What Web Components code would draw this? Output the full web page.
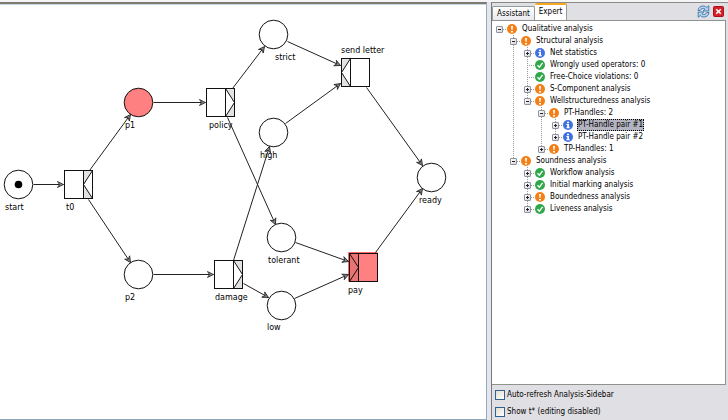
<!DOCTYPE html>
<html lang="en">
<head>
<meta charset="utf-8">
<title>Petri net analysis</title>
<style>
body{margin:0;background:#e0dfe3;color:#000;font:8px/12px "DejaVu Sans Condensed","DejaVu Sans",sans-serif;}
</style>
</head>
<body>
<net-workbench>
  <petri-net slot="editor"></petri-net>
  <analysis-sidebar slot="sidebar">
    <tree-item label="Qualitative analysis" icon="warn" state="open" root>
      <tree-item label="Structural analysis" icon="warn" state="open">
        <tree-item label="Net statistics" icon="info" state="closed"></tree-item>
        <tree-item label="Wrongly used operators: 0" icon="ok"></tree-item>
        <tree-item label="Free-Choice violations: 0" icon="ok"></tree-item>
        <tree-item label="S-Component analysis" icon="warn" state="closed"></tree-item>
        <tree-item label="Wellstructuredness analysis" icon="warn" state="open" last>
          <tree-item label="PT-Handles: 2" icon="warn" state="open">
            <tree-item label="PT-Handle pair #1" icon="info" state="closed" selected></tree-item>
            <tree-item label="PT-Handle pair #2" icon="info" state="closed" last></tree-item>
          </tree-item>
          <tree-item label="TP-Handles: 1" icon="warn" state="closed" last></tree-item>
        </tree-item>
      </tree-item>
      <tree-item label="Soundness analysis" icon="warn" state="open" last>
        <tree-item label="Workflow analysis" icon="ok" state="closed"></tree-item>
        <tree-item label="Initial marking analysis" icon="ok" state="closed"></tree-item>
        <tree-item label="Boundedness analysis" icon="warn" state="closed"></tree-item>
        <tree-item label="Liveness analysis" icon="ok" state="closed" last></tree-item>
      </tree-item>
    </tree-item>
    <check-option slot="options" label="Auto-refresh Analysis-Sidebar"></check-option>
    <check-option slot="options" label="Show t* (editing disabled)"></check-option>
  </analysis-sidebar>
</net-workbench>
<script>
function shadow(el, html) {
  el.attachShadow({mode: 'open'}).innerHTML = html;
}

class NetWorkbench extends HTMLElement {
  constructor() {
    super();
    shadow(this, `<style>
      :host{display:grid;grid-template-columns:minmax(0,1fr) 237px;column-gap:4px;min-height:100vh;box-sizing:border-box;padding-top:2px;background:linear-gradient(#f4f4f4 2px,#e6e5e9 2px)}
      ::slotted(*){min-width:0}
    </style><slot name="editor"></slot><slot name="sidebar"></slot>`);
  }
}

class PetriNet extends HTMLElement {
  constructor() {
    super();
    const places = [
      [18, 184, 'start', 5, 210, 'token'], [138, 102, 'p1', 125, 128, 'hot'], [138, 274, 'p2', 125, 300, ''],
      [273, 34, 'strict', 275, 60, ''], [273, 132, 'high', 260, 158, ''], [281, 237, 'tolerant', 268, 263, ''],
      [281, 305, 'low', 267, 330, ''], [431, 177, 'ready', 419, 203, '']
    ];
    /* Gate kinds: the side of the strip and the way its triangle points. */
    const gates = {
      andSplit: ['M19 0h9L19 14l9 14h-9z', 'M28 0 19 14l9 14', 19],
      xorSplit: ['M19 0h9v28h-9l9-14z', 'M19 0l9 14-9 14', 19],
      xorJoin: ['M9 0H0v28h9L0 14z', 'M9 0 0 14l9 14', 9],
      andJoin: ['M0 0h9v28H0z', 'M0 0l9 14-9 14', 9]
    };
    const transitions = [
      [64, 170, 'andSplit', 't0', 66, 210, ''], [206, 88, 'xorSplit', 'policy', 209, 128, ''],
      [214, 260, 'xorSplit', 'damage', 215, 300, ''], [341, 58, 'xorJoin', 'send letter', 341, 53, ''],
      [349, 253, 'andJoin', 'pay', 348, 293, 'hot']
    ];
    const arcs = [
      [33, 184, 63, 184], [89, 170, 130, 114], [88, 199, 130, 262], [153, 102, 205, 102], [153, 274, 213, 274],
      [232, 88, 264, 46], [227, 117, 275, 224], [287, 41, 340, 65], [285, 123, 340, 83], [233, 260, 269, 146],
      [243, 283, 268, 297], [366, 87, 422, 165], [295, 242, 348, 261], [294, 298, 348, 274], [375, 252, 422, 188]
    ];
    const label = (t, x, y) => `<text x="${x}" y="${y}">${t}</text>`;
    shadow(this, `<style>
      :host{display:flex;background:#fff;border-top:2px solid #7d7b70;border-right:1px solid #8fadcb;border-bottom:1px solid #8fa6b8;box-shadow:inset 0 1px #c3d9ea}
      svg{display:block;flex:1;min-width:0;min-height:380px}
      .shape{fill:none;stroke:#111;stroke-width:1}
      circle.shape,rect.shape{fill:#fff}
      .hot circle.shape,.hot rect.shape{fill:#ff8080}
      .strip{fill:#e2e2e2}.hot .strip{fill:#e87474}
      .arc{stroke:#222;stroke-width:1}
      text{font:8px "DejaVu Sans",sans-serif;fill:#000}
    </style>
    <svg role="img" aria-label="Workflow net">
      <defs><marker id="head" viewBox="-1 -1 9 9" refX="6" refY="3" markerWidth="9" markerHeight="9" orient="auto" markerUnits="userSpaceOnUse"><path d="M0 0 6 3 0 6 2 3z" fill="#888" stroke="#222" stroke-width=".8"/></marker></defs>
      <g transform="translate(0 -4)">
      <g transform="translate(.5 .5)">
      ${places.map(([x, y, t, lx, ly, c]) => `<g class="${c}"><circle class="shape" cx="${x}" cy="${y}" r="14.300"/>${c === 'token' ? `<circle cx="${x}" cy="${y}" r="3.800"/>` : ''}</g>`).join('')}
      ${transitions.map(([x, y, k, t, lx, ly, c]) => `<g class="${c}" transform="translate(${x} ${y})">${c ? '<path d="M-1 28V-1h29" fill="none" stroke="#f66"/>' : ''}<rect class="shape" width="28" height="28"/><path class="strip" d="${gates[k][0]}"/><path class="shape" d="${gates[k][1]}M${gates[k][2]} 0v28"/><rect width="28" height="28" fill="none" stroke="#111"/></g>`).join('')}
      ${arcs.map(([a, b, c, d]) => `<line class="arc" x1="${a}" y1="${b}" x2="${c}" y2="${d}" marker-end="url(#head)"/>`).join('')}
      </g>
      ${places.map(p => label(p[2], p[3], p[4])).join('')}
      ${transitions.map(t => label(t[3], t[4], t[5])).join('')}
      </g>
    </svg>`);
  }
}

class StatusIcon extends HTMLElement {
  static observedAttributes = ['kind'];
  constructor() { super(); shadow(this, ''); }
  attributeChangedCallback() {
    const kinds = {
      warn: ['#f57f17', '<path d="M4 2h2L5.500 6h-1zM4 7h2v1.500H4z" fill="#fff"/>'],
      info: ['#4170e0', '<path d="M4 1.800h2v1.400H4zM3.400 4H6v3.300h.8v.9H3.400v-.9h.8V4.900h-.8z" fill="#fff"/>'],
      ok: ['#2fa84a', '<path d="M2.500 5.200 4.400 7.200 7.600 2.900" fill="none" stroke="#fff" stroke-width="1.400"/>']
    };
    const [color, glyph] = kinds[this.getAttribute('kind')];
    this.shadowRoot.innerHTML = `<style>:host{display:block;width:10px;height:10px}svg{display:block}</style>
      <svg width="10" height="10" viewBox="0 0 10 10"><circle cx="5" cy="5" r="5" fill="${color}"/>${glyph}</svg>`;
  }
}

class TreeItem extends HTMLElement {
  connectedCallback() {
    if (this.shadowRoot) return;
    const label = this.getAttribute('label'), state = this.getAttribute('state');
    const guide = this.hasAttribute('root') ? '0' : this.hasAttribute('last') ? '6px' : '100%';
    shadow(this, `<style>
      :host{display:block;background:repeating-linear-gradient(#999 0 1px,transparent 1px 2px) 3px 0/1px ${guide} no-repeat}
      .row{display:flex;align-items:center;height:12px;background:repeating-linear-gradient(90deg,#999 0 1px,transparent 1px 2px) 3px 6px/8px 1px no-repeat}
      button{box-sizing:border-box;width:7px;height:7px;padding:0;border:1px solid #8d929e;border-radius:1px;
        background:linear-gradient(#222,#222) center/3px 1px no-repeat,${state === 'closed' ? 'linear-gradient(#222,#222) center/1px 3px no-repeat,' : ''}linear-gradient(135deg,#fff,#d5d5dc)}
      .gap{width:7px}
      status-icon{margin-left:4px}
      span{margin-left:4px;padding:0 1px;white-space:nowrap}
      .selected{background:#b4b4c0;outline:1px dotted #000;outline-offset:-1px}
      .children{margin-left:14px}
    </style>
    <div class="row">${state ? `<button type="button" aria-label="Toggle ${label}" aria-expanded="${state === 'open'}"></button>` : '<i class="gap"></i>'}
      <status-icon kind="${this.getAttribute('icon')}"></status-icon><span class="${this.hasAttribute('selected') ? 'selected' : ''}">${label}</span></div>
    <div class="children"><slot></slot></div>`);
  }
}

class CheckOption extends HTMLElement {
  connectedCallback() {
    if (this.shadowRoot) return;
    shadow(this, `<style>
      :host{display:block}
      label{display:flex;align-items:center;gap:2px;height:17px}
      input{appearance:none;box-sizing:border-box;width:10px;height:10px;margin:0;border:1px solid #2f6290;background:linear-gradient(135deg,#dedcd2,#fff)}
      input:checked{background:#2f6290}
    </style><label><input type="checkbox">${this.getAttribute('label')}</label>`);
  }
}

class AnalysisSidebar extends HTMLElement {
  constructor() {
    super();
    shadow(this, `<style>
      :host{display:flex;flex-direction:column;border-left:1px solid #77787c;border-top:1px solid #8a8a88;background:#e0dfe3}
      header{display:flex;align-items:flex-end;height:17px;padding-right:4px}
      button{font:inherit;color:inherit;border:0;padding:0;background:none}
      .tab{box-sizing:border-box;height:14px;padding:0 4px;border:1px solid #919b9c;border-bottom:0;border-radius:2px 2px 0 0;background:linear-gradient(#fff,#e8e8ee)}
      .tab.active{height:17px;padding:0 4px 2px;border-top:2px solid #f7a823;border-left:0;background:#fff}
      .tools{display:flex;align-items:center;gap:3px;margin:0 0 2px auto}
      .tools button,svg{display:block}
      .tree{flex:1;margin-right:2px;padding:2px 0 0 4px;border:1px solid #8f938e;border-left:0;background:#fff}
      footer{padding:1px 0 0 3px}
    </style>
    <header role="tablist">
      <button class="tab" type="button" role="tab" aria-selected="false">Assistant</button>
      <button class="tab active" type="button" role="tab" aria-selected="true">Expert</button>
      <div class="tools">
        <button type="button" aria-label="Refresh"><svg width="13" height="13" viewBox="0 0 13 13"><g fill="#b5d4f0" stroke="#2f68a5" stroke-width=".8"><path d="M1 5.500C1.200 2.800 3.300 1 6 1c1.600 0 2.800.5 3.700 1.500L11.800.7V6H6.200l1.900-1.900C6.300 2.900 3.800 3.400 3.300 5.500z"/><path d="M12 7.500C11.800 10.200 9.700 12 7 12c-1.600 0-2.800-.5-3.700-1.500L1.200 12.300V7h5.600L4.900 8.900C6.700 10.100 9.200 9.600 9.700 7.500z"/></g></svg></button>
        <button type="button" aria-label="Close"><svg width="11" height="11" viewBox="0 0 11 11"><rect x=".5" y=".5" width="10" height="10" rx="1" fill="#d81e28" stroke="#a80f1a"/><path d="M3.200 3.200 7.800 7.800M7.800 3.200 3.200 7.800" stroke="#fff" stroke-width="1.600"/></svg></button>
      </div>
    </header>
    <div class="tree" role="tree"><slot></slot></div>
    <footer><slot name="options"></slot></footer>`);
  }
}

customElements.define('status-icon', StatusIcon);
customElements.define('tree-item', TreeItem);
customElements.define('check-option', CheckOption);
customElements.define('petri-net', PetriNet);
customElements.define('analysis-sidebar', AnalysisSidebar);
customElements.define('net-workbench', NetWorkbench);
</script>
</body>
</html>
